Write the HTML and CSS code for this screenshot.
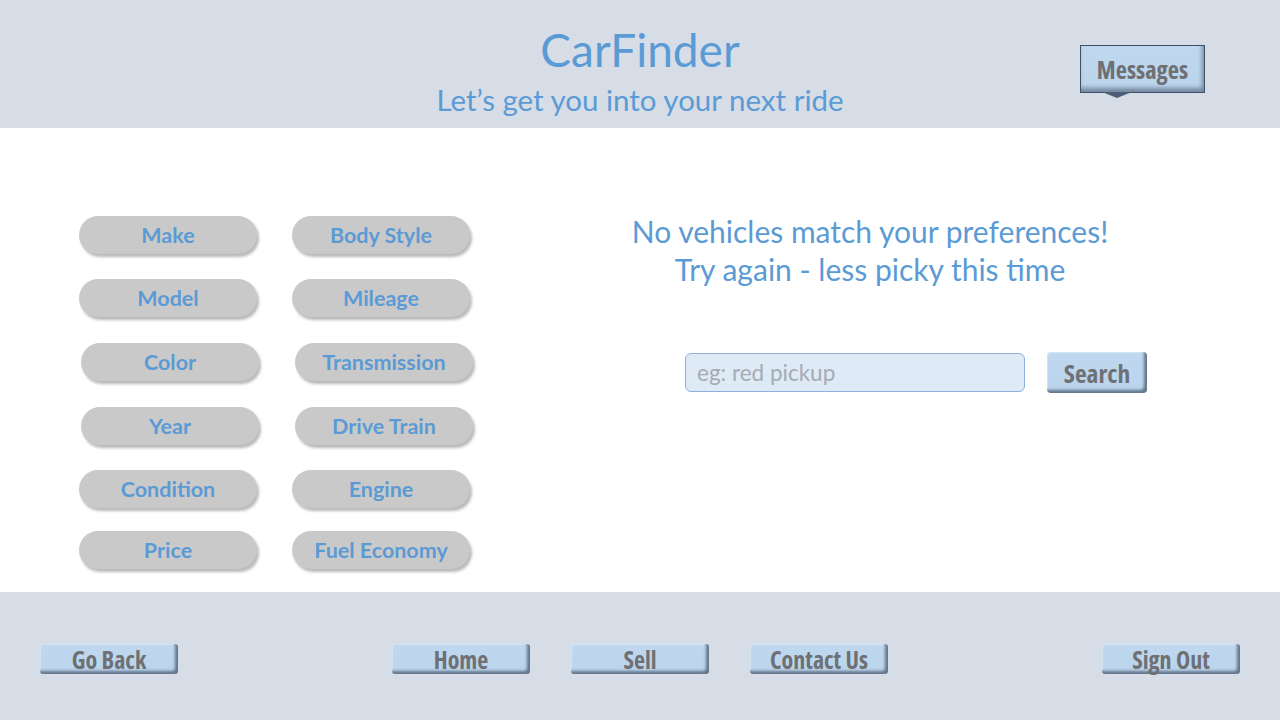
FILE: index.html
```html
<!DOCTYPE html>
<html lang="en">
<head>
<meta charset="utf-8">
<title>CarFinder</title>
<link rel="stylesheet" href="styles.css">
</head>
<body>
<header class="top">
  <div class="spacer"></div>
  <div class="brand">
    <h1 class="title">CarFinder</h1>
    <p class="tagline">Let’s get you into your next ride</p>
  </div>
  <div class="top-right">
    <button class="bevel messages">Messages</button>
  </div>
</header>

<main class="main">
  <section class="filters">
    <button class="pill">Make</button>
    <button class="pill">Body Style</button>
    <button class="pill">Model</button>
    <button class="pill">Mileage</button>
    <button class="pill shift-a">Color</button>
    <button class="pill shift-b">Transmission</button>
    <button class="pill shift-a">Year</button>
    <button class="pill shift-b">Drive Train</button>
    <button class="pill">Condition</button>
    <button class="pill">Engine</button>
    <button class="pill">Price</button>
    <button class="pill">Fuel Economy</button>
  </section>

  <section class="results">
    <p class="notice">No vehicles match your preferences!<br>Try again - less picky this time</p>
    <div class="search-row">
      <input class="search-input" type="text" placeholder="eg: red pickup">
      <button class="bevel search-btn">Search</button>
    </div>
  </section>
</main>

<footer class="bottom">
  <button class="bevel nav">Go Back</button>
  <div class="nav-group">
    <button class="bevel nav">Home</button>
    <button class="bevel nav">Sell</button>
    <button class="bevel nav">Contact Us</button>
  </div>
  <button class="bevel nav">Sign Out</button>
</footer>
</body>
</html>
```

FILE: styles.css
```css
* { box-sizing: border-box; }

html, body {
  margin: 0;
  padding: 0;
}

body {
  width: 1280px;
  height: 720px;
  overflow: hidden;
  background: #ffffff;
  font-family: Lato, "Open Sans", sans-serif;
}

button {
  font: inherit;
  cursor: pointer;
}

/* ---------- header ---------- */
.top {
  height: 128px;
  background: #d6dde6;
  display: grid;
  grid-template-columns: 1fr auto 1fr;
}

.brand {
  text-align: center;
  color: #5b9bd5;
  padding-top: 24px;
}

.title {
  margin: 0;
  font-size: 46px;
  font-weight: 400;
  line-height: 52px;
}

.tagline {
  margin: 0;
  font-size: 29.5px;
  line-height: 48px;
}

.top-right {
  display: flex;
  justify-content: flex-end;
  align-items: flex-start;
  padding-right: 75px;
  padding-top: 45px;
}

/* ---------- bevel buttons ---------- */
.bevel {
  border: none;
  background: linear-gradient(#bfd8ef, #bad4ec);
  color: #6e7074;
  font-family: "Open Sans", "DejaVu Sans Condensed", sans-serif;
  font-stretch: 75%;
  font-weight: 700;
  border-radius: 3px;
  box-shadow:
    inset -3px -3px 3px rgba(70, 85, 105, 0.75),
    inset 1px 1px 1px rgba(255, 255, 255, 0.35);
  padding: 0;
  display: flex;
  align-items: center;
  justify-content: center;
}

.messages {
  position: relative;
  width: 125px;
  height: 48px;
  font-size: 24.5px;
  border: 1px solid #3f5068;
  border-radius: 0;
  box-shadow:
    inset -2px -4px 4px rgba(70, 85, 105, 0.6);
}

.messages::after {
  content: "";
  position: absolute;
  left: 21px;
  bottom: -6px;
  width: 0;
  height: 0;
  border-left: 15px solid transparent;
  border-right: 15px solid transparent;
  border-top: 6px solid #4d5e77;
}

/* ---------- main ---------- */
.main {
  height: 464px;
  display: flex;
}

.filters {
  width: 540px;
  padding: 88px 0 0 79px;
  display: grid;
  grid-template-columns: 178px 178px;
  grid-template-rows: 63px 64px 64px 63px 61px 38px;
  column-gap: 35px;
  align-content: start;
}

.pill {
  border: none;
  border-radius: 19px;
  background: #c9c9c9;
  color: #5b9bd5;
  font-weight: 700;
  font-size: 21.5px;
  box-shadow: 2px 3px 3px rgba(0, 0, 0, 0.28);
  padding: 0;
  width: 178px;
  height: 38px;
  align-self: start;
}

.shift-a { margin-left: 2px; }
.shift-b { margin-left: 3px; }

.results {
  width: 660px;
  display: flex;
  flex-direction: column;
  padding-top: 84px;
}

.notice {
  margin: 0;
  text-align: center;
  color: #5b9bd5;
  font-size: 30px;
  line-height: 38px;
}

.search-row {
  display: flex;
  align-items: center;
  gap: 22px;
  margin: 64px 0 0 145px;
}

.search-input {
  width: 340px;
  height: 39px;
  border: 1px solid #8fb0da;
  border-radius: 6px;
  background: #deeaf6;
  padding: 0 11px;
  font-family: Lato, "Open Sans", sans-serif;
  font-size: 22.5px;
  color: #555;
}

.search-input::placeholder {
  color: #a6abb2;
}

.search-btn {
  width: 100px;
  height: 41px;
  font-size: 25.5px;
  border-radius: 4px;
}

/* ---------- footer ---------- */
.bottom {
  height: 128px;
  background: #d6dde6;
  display: flex;
  justify-content: space-between;
  align-items: flex-start;
  padding: 52px 40px 0 40px;
}

.nav-group {
  display: flex;
  gap: 41px;
}

.nav {
  width: 138px;
  height: 30px;
  font-size: 24px;
}
```
